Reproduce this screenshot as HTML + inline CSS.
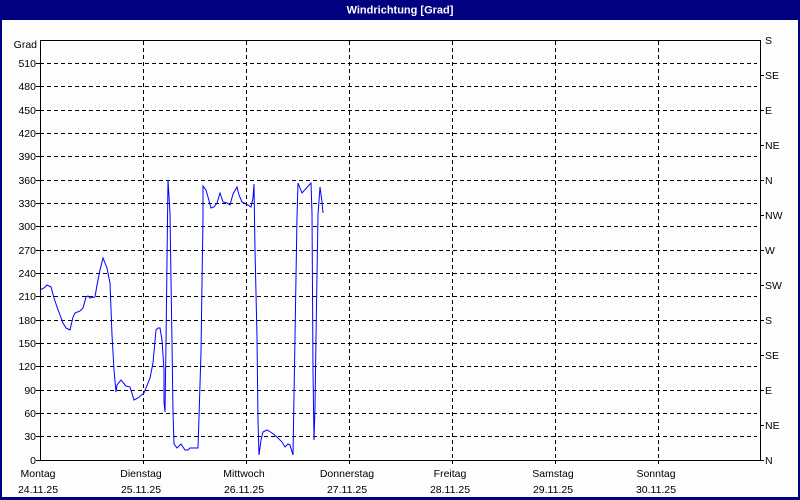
<!DOCTYPE html>
<html><head><meta charset="utf-8"><style>
html,body{margin:0;padding:0;background:#fff;}
svg{display:block;font-family:"Liberation Sans",sans-serif;}
</style></head><body>
<svg width="800" height="500" viewBox="0 0 800 500" xmlns="http://www.w3.org/2000/svg">
<rect x="0" y="0" width="800" height="500" fill="#000080"/>
<rect x="2" y="20" width="796" height="477" fill="#fdfdfd"/>
<text x="400" y="13.5" fill="#fff" font-size="11" font-weight="bold" text-anchor="middle">Windrichtung [Grad]</text>
<g stroke="#000" stroke-width="1" stroke-dasharray="4,3" fill="none">
<path d="M40 63.5H757M40 86.5H757M40 110.5H757M40 133.5H757M40 156.5H757M40 180.5H757M40 203.5H757M40 226.5H757M40 250.5H757M40 273.5H757M40 296.5H757M40 320.5H757M40 343.5H757M40 366.5H757M40 390.5H757M40 413.5H757M40 436.5H757"/>
<path d="M143.5 41V460M246.5 41V460M349.5 41V460M452.5 41V460M555.5 41V460M658.5 41V460"/>
</g>
<path d="M40.5 40V461M40 40.5H761M760.5 40V461M36 460.5H764" stroke="#000" fill="none"/>
<path d="M36 63.5H40M36 86.5H40M36 110.5H40M36 133.5H40M36 156.5H40M36 180.5H40M36 203.5H40M36 226.5H40M36 250.5H40M36 273.5H40M36 296.5H40M36 320.5H40M36 343.5H40M36 366.5H40M36 390.5H40M36 413.5H40M36 436.5H40M761 75.5H764M761 110.5H764M761 145.5H764M761 180.5H764M761 215.5H764M761 250.5H764M761 285.5H764M761 320.5H764M761 355.5H764M761 390.5H764M761 425.5H764M143.5 460V464M246.5 460V464M349.5 460V464M452.5 460V464M555.5 460V464M658.5 460V464" stroke="#000" fill="none"/>
<g font-size="10.5" fill="#000" text-anchor="end">
<text x="37" y="48">Grad</text>
<text x="36" y="67">510</text><text x="36" y="90">480</text><text x="36" y="114">450</text><text x="36" y="137">420</text><text x="36" y="160">390</text><text x="36" y="184">360</text><text x="36" y="207">330</text><text x="36" y="230">300</text><text x="36" y="254">270</text><text x="36" y="277">240</text><text x="36" y="300">210</text><text x="36" y="324">180</text><text x="36" y="347">150</text><text x="36" y="370">120</text><text x="36" y="394">90</text><text x="36" y="417">60</text><text x="36" y="440">30</text><text x="36" y="464">0</text>
</g>
<g font-size="10.5" fill="#000">
<text x="765" y="44">S</text><text x="765" y="79">SE</text><text x="765" y="114">E</text><text x="765" y="149">NE</text><text x="765" y="184">N</text><text x="765" y="219">NW</text><text x="765" y="254">W</text><text x="765" y="289">SW</text><text x="765" y="324">S</text><text x="765" y="359">SE</text><text x="765" y="394">E</text><text x="765" y="429">NE</text><text x="765" y="464">N</text>
</g>
<g font-size="10.5" fill="#000" text-anchor="middle">
<text x="38" y="477">Montag</text><text x="38" y="493">24.11.25</text>
<text x="141" y="477">Dienstag</text><text x="141" y="493">25.11.25</text>
<text x="244" y="477">Mittwoch</text><text x="244" y="493">26.11.25</text>
<text x="347" y="477">Donnerstag</text><text x="347" y="493">27.11.25</text>
<text x="450" y="477">Freitag</text><text x="450" y="493">28.11.25</text>
<text x="553" y="477">Samstag</text><text x="553" y="493">29.11.25</text>
<text x="656" y="477">Sonntag</text><text x="656" y="493">30.11.25</text>
</g>
<polyline fill="none" stroke="#0000ff" stroke-width="1" points="40,290 44,288 47,285 51,287 54,298 57,307 60,315 63,323 66,328 70,330 73,317 75,313 80,311 83,308 86,297 88,296 90,298 95,297 97,285 100,270 103,258 107,268 110,283 112,335 114,370 116,392 117,385 121,380 126,386 130,387 134,400 138,398 144,393 150,378 153,363 156,330 158,328 160,328 162,340 164,370 164,402 165,412 166,343 168,180 170,213 171,280 172,343 173,412 174,444 177,448 181,444 185,450 188,450 190,448 198,448 199,417 201,352 202,283 203,218 203,186 206,190 208,197 211,208 214,207 217,203 220,193 223,202 227,203 230,205 233,194 237,187 239,195 242,202 244,203 248,205 251,207 253,198 254,184 255,250 257,337 258,420 259,455 261,440 263,432 267,430 272,433 277,437 282,442 285,447 288,444 290,445 293,455 295,337 297,217 298,183 302,193 311,183 312,213 313,370 314,440 315,408 316,337 318,215 320,187 322,202 323,213"/>
</svg>
</body></html>
